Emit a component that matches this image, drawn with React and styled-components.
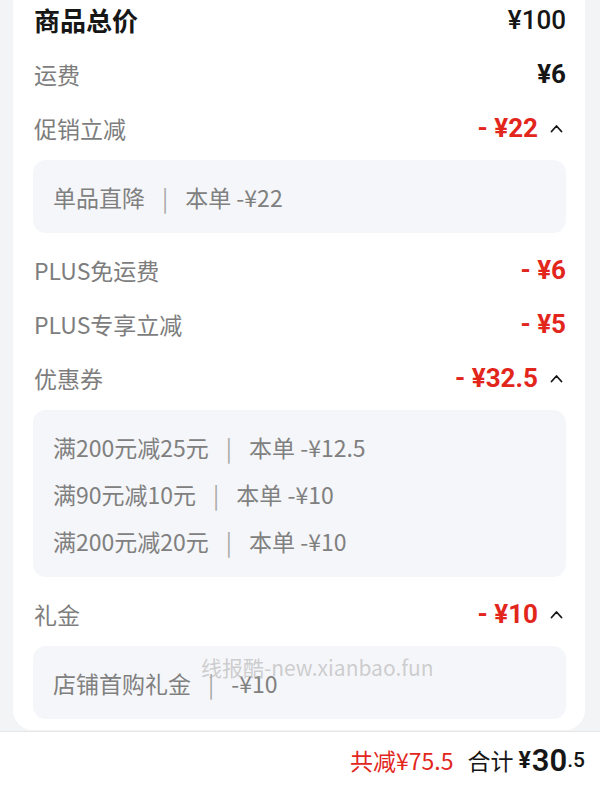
import { createGlobalStyle, styled } from "styled-components";

const GlobalStyle = createGlobalStyle`
  html, body {
    margin: 0;
    padding: 0;
    background: #f3f4f6;
    font-family: "Noto Sans CJK SC", "Noto Sans", sans-serif;
    overflow: hidden;
  }
`;

const Page = styled.div`
  display: flex;
  flex-direction: column;
  height: 100vh;
  overflow: hidden;
`;

const Card = styled.div`
  position: relative;
  margin: -20px 15px 0 13px;
  padding: 13px 19px 11px 20px;
  background: #ffffff;
  border-radius: 20px;
  display: flex;
  flex-direction: column;
`;

const Row = styled.div`
  height: 54px;
  display: flex;
  align-items: center;
  justify-content: space-between;
`;

const Label = styled.span`
  font-size: ${(p) => (p.$title ? "26px" : "23px")};
  font-weight: ${(p) => (p.$title ? 700 : 400)};
  color: ${(p) => (p.$title ? "#161616" : "#7d7d7d")};
  padding-left: 1px;
  line-height: 1;
`;

const Value = styled.span`
  display: flex;
  align-items: center;
  gap: 12px;
`;

const Amount = styled.span`
  font-family: Roboto, "Noto Sans CJK SC", sans-serif;
  font-size: 26px;
  font-weight: ${(p) => (p.$bold ? 700 : 500)};
  color: ${(p) => (p.$red ? "#e2261c" : "#161616")};
  white-space: pre;
  line-height: 1;
`;

const Detail = styled.div`
  margin: 5px 0 ${(p) => (p.$last ? "0" : "10px")};
  padding: 13px 20px;
  background: #f5f6f9;
  border-radius: 13px;
`;

const DetailLine = styled.div`
  height: 47px;
  display: flex;
  align-items: center;
  font-size: 23px;
  color: #808080;
  white-space: pre;
`;

const Sep = styled.span`
  margin: 0 17px;
  color: #a8a8a8;
`;

const Watermark = styled.div`
  position: absolute;
  left: 188px;
  top: 672px;
  font-size: 21px;
  color: rgba(170, 170, 170, 0.55);
  pointer-events: none;
  white-space: nowrap;
`;

const Footer = styled.div`
  margin-top: auto;
  height: 56px;
  border-top: 1px solid #e6e6e6;
  background: #ffffff;
  display: flex;
  align-items: center;
  justify-content: flex-end;
  padding-right: 15px;
  padding-bottom: 2px;
`;

const Saved = styled.span`
  font-size: 23px;
  color: #e2261c;
  margin-right: 14px;
`;

const TotalLabel = styled.span`
  font-size: 23px;
  color: #161616;
  margin-right: 5px;
`;

const Yen = styled.span`
  font-family: Roboto, sans-serif;
  font-size: 23px;
  font-weight: 700;
  color: #161616;
  margin-right: 1px;
`;

const Big = styled.span`
  font-family: Roboto, sans-serif;
  font-size: 31px;
  font-weight: 600;
  color: #161616;
`;

const Small = styled.span`
  font-family: Roboto, sans-serif;
  font-size: 21px;
  font-weight: 500;
  color: #161616;
`;

function Caret() {
  return (
    <svg width="13" height="9" viewBox="0 0 13 9" style={{ marginRight: 3 }}>
      <polyline points="1.5,7.5 6.5,2 11.5,7.5" fill="none" stroke="#161616" strokeWidth="1.8" strokeLinecap="round" strokeLinejoin="round" />
    </svg>
  );
}

const lines = {
  promo: [["单品直降", "本单 -¥22"]],
  coupon: [
    ["满200元减25元", "本单 -¥12.5"],
    ["满90元减10元", "本单 -¥10"],
    ["满200元减20元", "本单 -¥10"],
  ],
  gift: [["店铺首购礼金", "-¥10"]],
};

function DetailBox({ items, last }) {
  return (
    <Detail $last={last}>
      {items.map(([a, b]) => (
        <DetailLine key={a}>
          {a}
          <Sep>|</Sep>
          {b}
        </DetailLine>
      ))}
    </Detail>
  );
}

export default function App() {
  return (
    <Page>
      <GlobalStyle />
      <Card>
        <Row>
          <Label $title>商品总价</Label>
          <Amount>¥100</Amount>
        </Row>
        <Row>
          <Label>运费</Label>
          <Amount $bold>¥6</Amount>
        </Row>
        <Row>
          <Label>促销立减</Label>
          <Value>
            <Amount $red $bold>- ¥22</Amount>
            <Caret />
          </Value>
        </Row>
        <DetailBox items={lines.promo} />
        <Row>
          <Label>PLUS免运费</Label>
          <Amount $red $bold>- ¥6</Amount>
        </Row>
        <Row>
          <Label>PLUS专享立减</Label>
          <Amount $red $bold>- ¥5</Amount>
        </Row>
        <Row>
          <Label>优惠券</Label>
          <Value>
            <Amount $red $bold>- ¥32.5</Amount>
            <Caret />
          </Value>
        </Row>
        <DetailBox items={lines.coupon} />
        <Row>
          <Label>礼金</Label>
          <Value>
            <Amount $red $bold>- ¥10</Amount>
            <Caret />
          </Value>
        </Row>
        <DetailBox items={lines.gift} last />
        <Watermark>线报酷-new.xianbao.fun</Watermark>
      </Card>
      <Footer>
        <Saved>共减¥75.5</Saved>
        <TotalLabel>合计</TotalLabel>
        <Yen>¥</Yen>
        <Big>30</Big>
        <Small>.5</Small>
      </Footer>
    </Page>
  );
}
